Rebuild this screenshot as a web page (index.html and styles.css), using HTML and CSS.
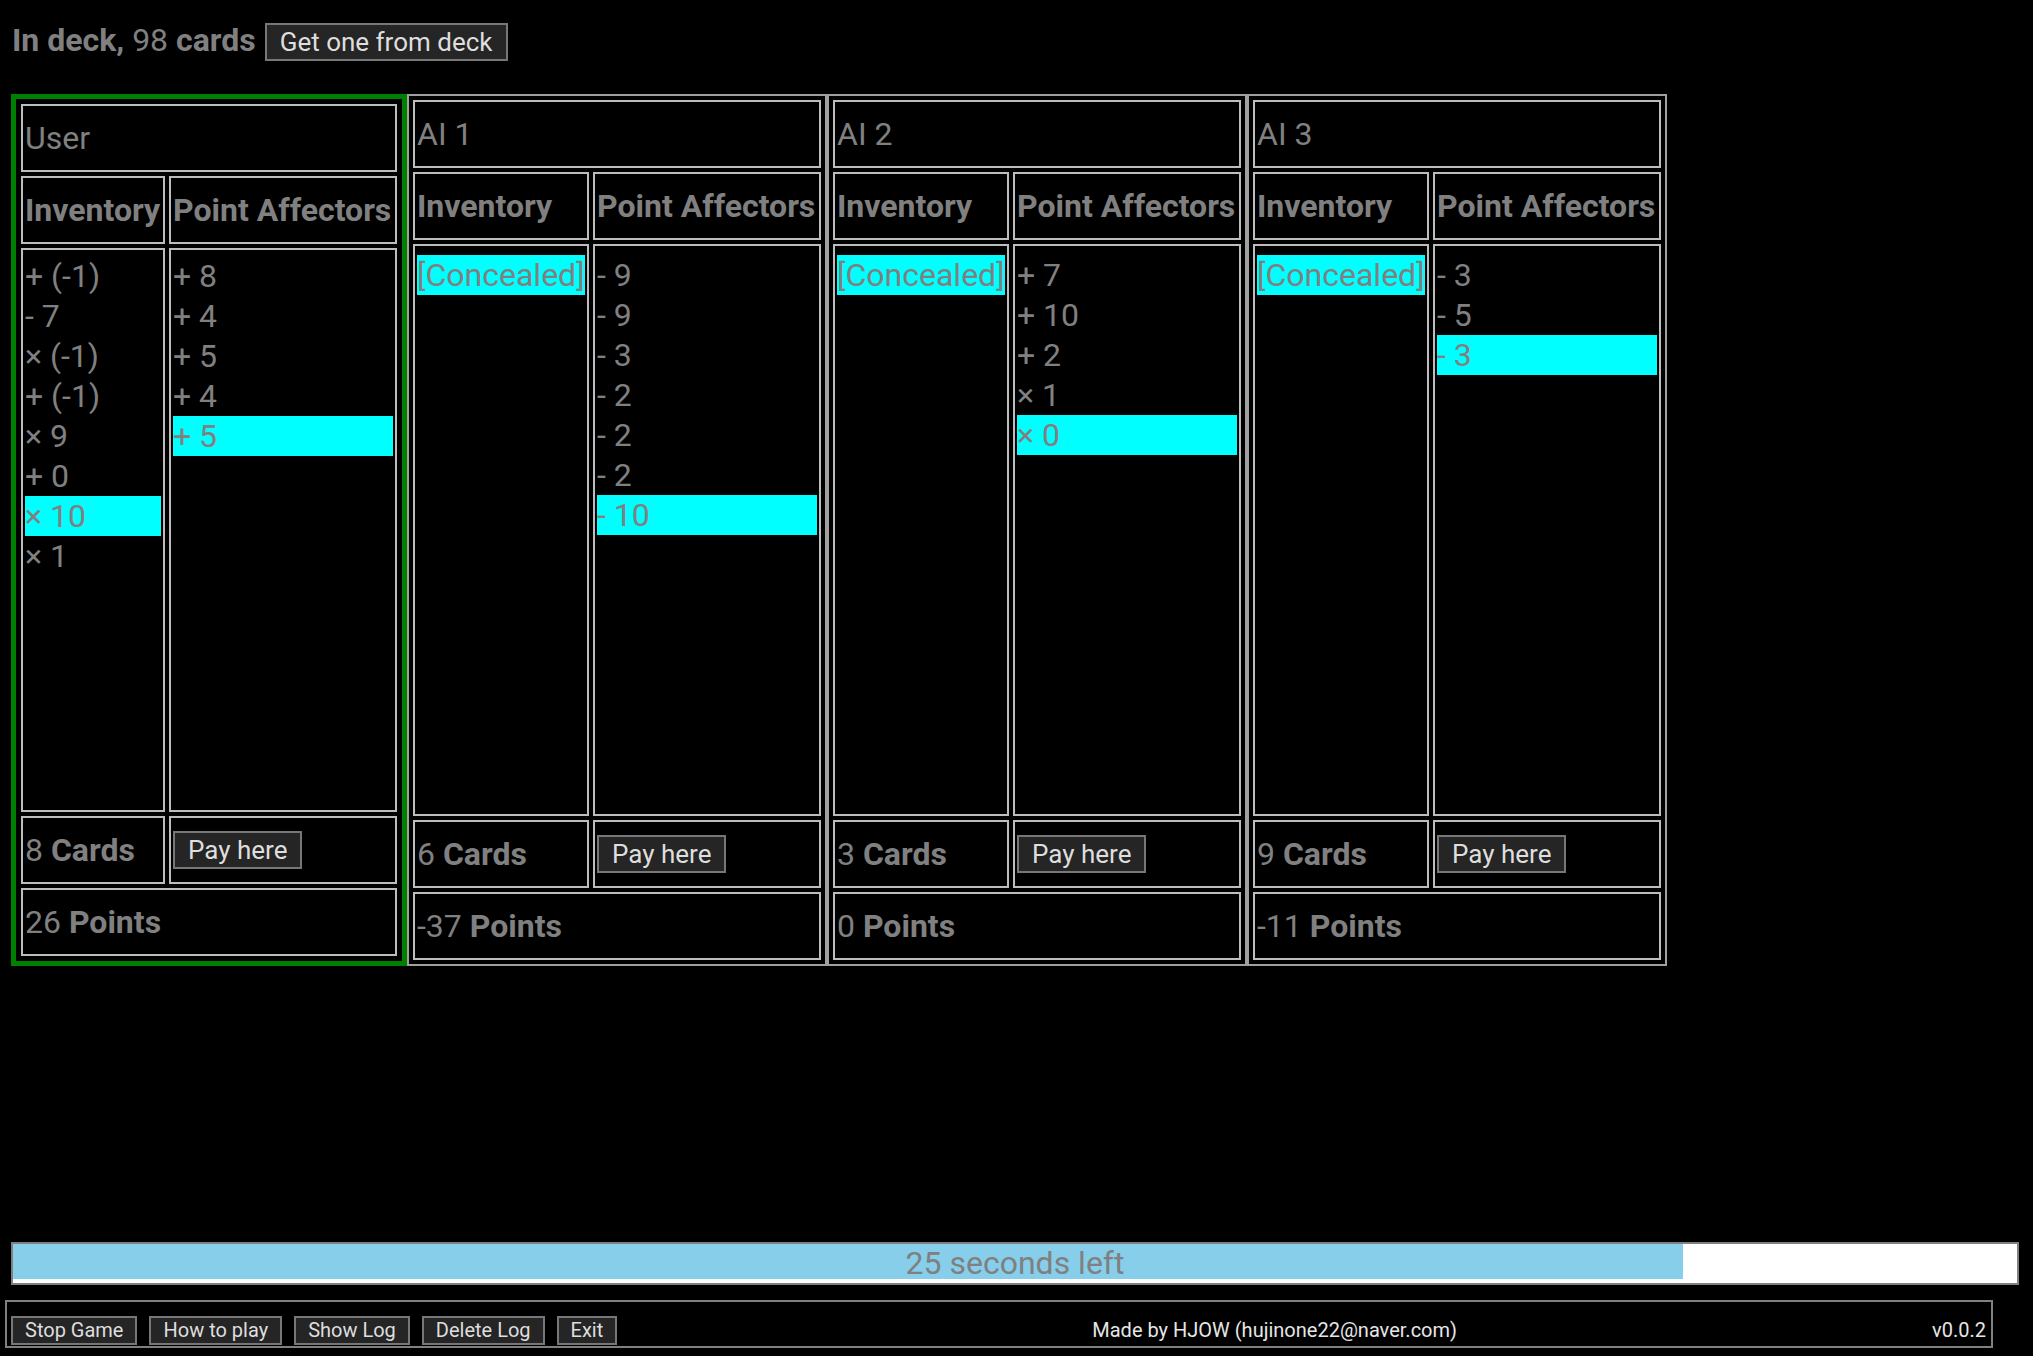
FILE: index.html
```html
<!DOCTYPE html>
<html lang="en">
<head>
<meta charset="utf-8">
<title>Card Game</title>
<link rel="stylesheet" href="styles.css">
</head>
<body>
<div class="page">
  <div class="deck">
    <span class="deck-label"><b>In deck,</b> 98 <b>cards</b></span>
    <button class="btn btn-big">Get one from deck</button>
  </div>

  <div class="players">
    <section class="panel panel-user">
      <div class="cell cell-name">User</div>
      <div class="cell cell-head">Inventory</div>
      <div class="cell cell-head">Point Affectors</div>
      <div class="cell cell-list">
        <div class="item">+ (-1)</div>
        <div class="item">- 7</div>
        <div class="item">× (-1)</div>
        <div class="item">+ (-1)</div>
        <div class="item">× 9</div>
        <div class="item">+ 0</div>
        <div class="item sel">× 10</div>
        <div class="item">× 1</div>
      </div>
      <div class="cell cell-list">
        <div class="item">+ 8</div>
        <div class="item">+ 4</div>
        <div class="item">+ 5</div>
        <div class="item">+ 4</div>
        <div class="item sel">+ 5</div>
      </div>
      <div class="cell cell-count">8&nbsp;<b>Cards</b></div>
      <div class="cell cell-pay"><button class="btn btn-big">Pay here</button></div>
      <div class="cell cell-points">26&nbsp;<b>Points</b></div>
    </section>

    <section class="panel">
      <div class="cell cell-name">AI 1</div>
      <div class="cell cell-head">Inventory</div>
      <div class="cell cell-head">Point Affectors</div>
      <div class="cell cell-list">
        <div class="item"><span class="concealed">[Concealed]</span></div>
      </div>
      <div class="cell cell-list">
        <div class="item">- 9</div>
        <div class="item">- 9</div>
        <div class="item">- 3</div>
        <div class="item">- 2</div>
        <div class="item">- 2</div>
        <div class="item">- 2</div>
        <div class="item sel">- 10</div>
      </div>
      <div class="cell cell-count">6&nbsp;<b>Cards</b></div>
      <div class="cell cell-pay"><button class="btn btn-big">Pay here</button></div>
      <div class="cell cell-points">-37&nbsp;<b>Points</b></div>
    </section>

    <section class="panel">
      <div class="cell cell-name">AI 2</div>
      <div class="cell cell-head">Inventory</div>
      <div class="cell cell-head">Point Affectors</div>
      <div class="cell cell-list">
        <div class="item"><span class="concealed">[Concealed]</span></div>
      </div>
      <div class="cell cell-list">
        <div class="item">+ 7</div>
        <div class="item">+ 10</div>
        <div class="item">+ 2</div>
        <div class="item">× 1</div>
        <div class="item sel">× 0</div>
      </div>
      <div class="cell cell-count">3&nbsp;<b>Cards</b></div>
      <div class="cell cell-pay"><button class="btn btn-big">Pay here</button></div>
      <div class="cell cell-points">0&nbsp;<b>Points</b></div>
    </section>

    <section class="panel">
      <div class="cell cell-name">AI 3</div>
      <div class="cell cell-head">Inventory</div>
      <div class="cell cell-head">Point Affectors</div>
      <div class="cell cell-list">
        <div class="item"><span class="concealed">[Concealed]</span></div>
      </div>
      <div class="cell cell-list">
        <div class="item">- 3</div>
        <div class="item">- 5</div>
        <div class="item sel">- 3</div>
      </div>
      <div class="cell cell-count">9&nbsp;<b>Cards</b></div>
      <div class="cell cell-pay"><button class="btn btn-big">Pay here</button></div>
      <div class="cell cell-points">-11&nbsp;<b>Points</b></div>
    </section>
  </div>

  <div class="timer">
    <div class="timer-fill" style="width: 83.33%"></div>
    <div class="timer-label">25 seconds left</div>
  </div>

  <div class="footer">
    <div class="footer-buttons">
      <button class="btn btn-small">Stop Game</button>
      <button class="btn btn-small">How to play</button>
      <button class="btn btn-small">Show Log</button>
      <button class="btn btn-small">Delete Log</button>
      <button class="btn btn-small">Exit</button>
    </div>
    <div class="footer-credit">Made by HJOW (hujinone22@naver.com)</div>
    <div class="footer-version">v0.0.2</div>
  </div>
</div>
</body>
</html>
```

FILE: styles.css
```css
* {
  box-sizing: border-box;
}

html,
body {
  margin: 0;
  padding: 0;
  background: #000;
}

body {
  font-family: Roboto, "Noto Sans", sans-serif;
  color: #808080;
}

.page {
  height: 100vh;
  display: flex;
  flex-direction: column;
}

/* ---------- deck line ---------- */
.deck {
  display: flex;
  align-items: baseline;
  gap: 9px;
  padding: 22px 0 0 12px;
  font-size: 32px;
  line-height: 36px;
}

.deck b {
  font-weight: 700;
}

.btn {
  font-family: Roboto, "Noto Sans", sans-serif;
  background: #252525;
  color: #dedede;
  border: 2px solid #777;
  border-radius: 0;
  margin: 0;
  cursor: pointer;
}

.btn-big {
  font-size: 26px;
  line-height: 30px;
  padding: 2px 13px;
}

.btn-small {
  font-size: 20px;
  line-height: 23px;
  padding: 1px 12px;
}

/* ---------- players ---------- */
.players {
  display: flex;
  margin: 33px 0 0 11px;
  height: 872px;
}

.panel {
  display: grid;
  grid-template-columns: 176px 228px;
  grid-template-rows: 68px 68px 1fr 68px 68px;
  gap: 4px;
  border: 2px solid #a0a0a0;
  padding: 4px;
}

.panel-user {
  grid-template-columns: 144px 228px;
  border: 5px solid #008000;
  padding: 5px;
}

.cell {
  border: 2px solid #bdbdbd;
  padding: 0 2px;
  font-size: 32px;
  line-height: 40px;
  display: flex;
  align-items: center;
  white-space: nowrap;
  overflow: hidden;
}

.cell-name,
.cell-points {
  grid-column: 1 / 3;
}

.cell-head {
  font-weight: 700;
}

.cell-list {
  display: block;
  padding-top: 9px;
}

.panel-user .cell-list {
  padding-top: 6px;
}

.item {
  height: 40px;
}

.item.sel {
  background: #00ffff;
}

.concealed {
  display: inline-block;
  background: #00ffff;
}

.cell-pay {
  padding-left: 2px;
}

/* ---------- timer ---------- */
.timer {
  margin: auto 14px 0 11px;
  height: 43px;
  border: 2px solid #808080;
  background: #fff;
  display: grid;
  grid-template-columns: 1fr;
  grid-template-rows: 1fr;
}

.timer-fill {
  grid-area: 1 / 1;
  height: 35px;
  background: #87ceeb;
}

.timer-label {
  grid-area: 1 / 1;
  text-align: center;
  font-size: 32px;
  line-height: 39px;
  color: #808080;
}

/* ---------- footer ---------- */
.footer {
  margin: 15px 0 8px 5px;
  width: 1988px;
  height: 48px;
  border: 2px solid #808080;
  display: flex;
  align-items: flex-end;
  padding: 0 5px 1px 4px;
  color: #e6e6e6;
  font-size: 20px;
  line-height: 29px;
}

.footer-buttons {
  display: flex;
  gap: 12px;
}

.footer-credit {
  flex: 1;
  text-align: center;
}

.footer-version {
  text-align: right;
}
```
